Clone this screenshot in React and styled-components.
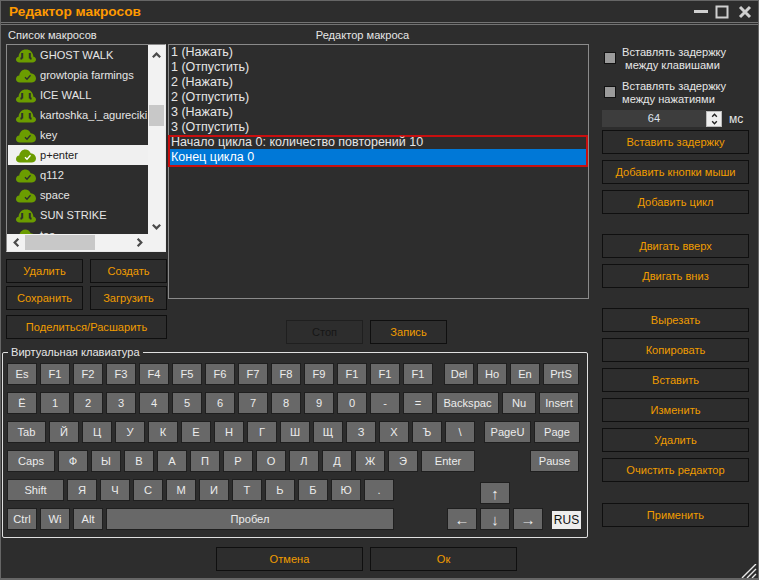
import styled, { createGlobalStyle } from "styled-components";

const Global = createGlobalStyle`
  html, body {
    margin: 0;
    padding: 0;
    background: #2d2d2d;
  }
  * {
    box-sizing: border-box;
  }
`;

const Window = styled.div`
  width: 759px;
  height: 580px;
  background: #2d2d2d;
  color: #e6e6e6;
  font-family: "Liberation Sans", sans-serif;
  font-size: 11.1px;
  border: 1px solid #666;
  border-width: 1px 1px 2px 1px;
  display: flex;
  flex-direction: column;
  position: relative;
  overflow: hidden;
`;

const TitleBar = styled.div`
  height: 22px;
  padding-left: 8px;
  display: flex;
  align-items: center;
  justify-content: space-between;
  border-bottom: 1px solid #737373;
`;

const Title = styled.div`
  color: #ff9a00;
  font-weight: bold;
  font-size: 13.7px;
`;

const WindowIcons = styled.div`
  display: flex;
  align-items: center;
  margin-right: 6px;
`;

const Body = styled.div`
  flex: 1;
  display: flex;
  border-top: 1px solid #737373;
  margin-top: 1px;
`;

const MainColumn = styled.div`
  width: 587px;
  margin-left: 1px;
  display: flex;
  flex-direction: column;
`;

const TopRow = styled.div`
  display: flex;
  padding-left: 4px;
  height: 320px;
`;

const ListColumn = styled.div`
  width: 162px;
`;

const EditorColumn = styled.div`
  flex: 1;
  display: flex;
  flex-direction: column;
`;

const Caption = styled.div`
  height: 19px;
  line-height: 14px;
  padding-top: 3px;
  padding-left: ${(props) => (props.$center ? "0" : "2px")};
  padding-right: ${(props) => (props.$center ? "32px" : "0")};
  text-align: ${(props) => (props.$center ? "center" : "left")};
  color: #e6e6e6;
`;

const ListBox = styled.div`
  width: 160px;
  height: 208px;
  border: 1px solid #8a8a8a;
  border-right-color: #e8e8e8;
  border-bottom-color: #e8e8e8;
  display: grid;
  grid-template-columns: 1fr 17px;
  grid-template-rows: 1fr 17px;
  overflow: hidden;
`;

const Rows = styled.div`
  overflow: hidden;
  padding-left: 1px;
`;

const Row = styled.div`
  height: 20px;
  display: flex;
  align-items: center;
  gap: 4px;
  padding-left: 8px;
  white-space: nowrap;
  overflow: hidden;
  background: ${(props) => (props.$selected ? "#f0f0f0" : "transparent")};
  color: ${(props) => (props.$selected ? "#222" : "#e6e6e6")};
`;

const VScroll = styled.div`
  background: #f2f2f2;
  display: flex;
  flex-direction: column;
  align-items: center;
  position: relative;
  padding-top: 5px;
`;

const VThumb = styled.div`
  width: 15px;
  height: 21px;
  background: #c8c8c8;
  margin-top: 44px;
  margin-bottom: 95px;
`;

const HScroll = styled.div`
  grid-column: 1 / 3;
  background: #f2f2f2;
  display: flex;
  align-items: center;
  padding-left: 4px;
`;

const HThumb = styled.div`
  width: 70px;
  height: 15px;
  background: #c8c8c8;
  margin-left: 3px;
  margin-right: 39px;
`;

const Button = styled.button`
  display: block;
  width: ${(props) => props.$w || 147}px;
  height: 24px;
  padding: 0;
  background: #2d2d2d;
  border: 1px solid ${(props) => (props.$off ? "#1f1f1f" : "#0f0f0f")};
  color: ${(props) => (props.$off ? "#161616" : "#f09c00")};
  font: inherit;
  margin-top: ${(props) => props.$mt || 0}px;
`;

const ButtonGrid = styled.div`
  display: grid;
  grid-template-columns: 77px 77px;
  column-gap: 7px;
  row-gap: 3px;
  margin-top: 7px;
`;

const EditorBox = styled.div`
  height: 255px;
  border: 1px solid #8a8a8a;
  font-size: 12.5px;
`;

const Step = styled.div`
  height: ${(props) => (props.$selected ? 16 : 15)}px;
  line-height: 15px;
  margin-top: ${(props) => (props.$selected ? -1 : 0)}px;
  padding-top: ${(props) => (props.$selected ? 1 : 0)}px;
  padding-left: 2px;
  white-space: nowrap;
  color: ${(props) => (props.$selected ? "#fff" : "#e6e6e6")};
  background: ${(props) => (props.$selected ? "#0078d7" : "transparent")};
`;

const Marked = styled.div`
  margin-left: -1px;
  border: 2px solid #c80f0f;
  height: 32px;
  & > * {
    padding-left: 1px;
  }
  & > :first-child {
    margin-top: -2px;
  }
`;

const RecordRow = styled.div`
  display: flex;
  gap: 7px;
  margin-top: 21px;
  padding-left: 118px;
`;

const Keyboard = styled.fieldset`
  margin: 0;
  width: 586px;
  height: 193px;
  border: 1px solid #e0e0e0;
  border-radius: 2px;
  padding: 4px 0 0 4px;
  display: flex;
  flex-direction: column;
  gap: 7px;
`;

const Legend = styled.legend`
  padding: 0 3px;
  margin-left: 1px;
  line-height: 14px;
  color: #e6e6e6;
`;

const KeyRow = styled.div`
  display: flex;
  gap: 3px;
  height: 22px;
  align-items: flex-start;
`;

const Key = styled.div`
  width: ${(props) => props.$w || 30}px;
  height: 22px;
  margin-left: ${(props) => props.$ml || 0}px;
  margin-top: ${(props) => props.$mt || 0}px;
  flex: none;
  background: #686868;
  border: 1px solid #1f1f1f;
  color: #ececec;
  font-size: ${(props) => (props.$arrow ? "15px" : "inherit")};
  display: flex;
  align-items: center;
  justify-content: center;
  white-space: nowrap;
  overflow: hidden;
`;

const LangBadge = styled.div`
  width: 29px;
  height: 18px;
  margin-left: 6px;
  margin-top: 3px;
  background: #ededed;
  color: #111;
  font-size: 12px;
  display: flex;
  align-items: center;
  justify-content: center;
`;

const FooterRow = styled.div`
  display: flex;
  gap: 7px;
  margin-top: 9px;
  padding-left: 214px;
`;

const Side = styled.div`
  width: 147px;
  margin-left: 13px;
  padding-top: 21px;
`;

const CheckRow = styled.div`
  display: flex;
  align-items: center;
  height: 26px;
  padding-left: 2px;
  gap: 6px;
  margin-bottom: ${(props) => props.$mb || 0}px;
`;

const Check = styled.div`
  width: 12px;
  height: 12px;
  flex: none;
  margin-top: -2px;
  background: #9a9a9a;
  border: 1px solid #111;
`;

const CheckText = styled.div`
  line-height: 13px;
  white-space: pre;
`;

const SpinRow = styled.div`
  display: flex;
  align-items: center;
  height: 17px;
  margin-top: 4px;
`;

const SpinField = styled.div`
  width: 104px;
  height: 17px;
  background: #3d3d3d;
  text-align: center;
  line-height: 16px;
  color: #dfe6f0;
`;

const Spinner = styled.div`
  width: 16px;
  height: 16px;
  background: #eee;
  display: flex;
  flex-direction: column;
  align-items: center;
  justify-content: space-around;
  border: 1px solid #bbb;
`;

const SpinLine = styled.div`
  width: 100%;
  height: 1px;
  background: #999;
`;

const Unit = styled.div`
  margin-left: 7px;
  font-size: 12px;
`;

const Grip = styled.svg`
  position: absolute;
  right: 1px;
  bottom: 0;
`;

const CloudOk = ({ selected }) => (
  <svg width="20" height="15" viewBox="0 0 20 15" style={{ flex: "none" }}>
    <path d="M4 14.5C1.5 14.5 0 13 0 11 0 9 1.4 7.7 3.2 7.5 3.8 3.6 6.5 1.5 9.2 1.5 11.8 1.5 13.8 3 14.7 5.2 17.6 5.4 20 7.6 20 10.4 20 12.8 18 14.5 15.5 14.5Z" fill="#6b9c00" />
    <path d="M9 9.2L11 11.2 14.5 7.2" fill="none" stroke={selected ? "#fff" : "#2d2d2d"} strokeWidth="1.3" />
  </svg>
);

const CloudSync = () => (
  <svg width="20" height="15" viewBox="0 0 20 15" style={{ flex: "none" }}>
    <path d="M3.5 14.5C1.4 14.5 0 13.3 0 11.6 0 10 1.1 8.9 2.6 8.7 3 4.2 5.8 1.5 10 1.5 14.2 1.5 17 4.2 17.4 8.7 18.9 8.9 20 10 20 11.6 20 13.3 18.6 14.5 16.5 14.5Z" fill="#6b9c00" />
    <path d="M6.2 5V10.5M6.2 10.5H4.4M13.8 5V10.5M13.8 10.5H15.6" fill="none" stroke="#2d2d2d" strokeWidth="2" />
  </svg>
);

const Arrow = ({ dir, color = "#4a4a4a", size = 11 }) => {
  const points = {
    up: "2,8 6,4 10,8",
    down: "2,4 6,8 10,4",
    left: "8,2 4,6 8,10",
    right: "4,2 8,6 4,10",
  };
  return (
    <svg width={size} height={size} viewBox="0 0 12 12" style={{ flex: "none" }}>
      <polyline points={points[dir]} fill="none" stroke={color} strokeWidth="2.4" />
    </svg>
  );
};

const macros = [
  ["GHOST WALK", "sync"],
  ["growtopia farmings", "ok"],
  ["ICE WALL", "sync"],
  ["kartoshka_i_agureciki", "sync"],
  ["key", "ok"],
  ["p+enter", "ok", true],
  ["q112", "ok"],
  ["space", "ok"],
  ["SUN STRIKE", "sync"],
  ["tes", "ok"],
];

const steps = ["1 (Нажать)", "1 (Отпустить)", "2 (Нажать)", "2 (Отпустить)", "3 (Нажать)", "3 (Отпустить)"];

const keyRows = [
  [["Es"], ["F1"], ["F2"], ["F3"], ["F4"], ["F5"], ["F6"], ["F7"], ["F8"], ["F9"], ["F1"], ["F1"], ["F1"], ["Del", 30, 8], ["Ho"], ["En"], ["PrtS", 36]],
  [["Ё"], ["1"], ["2"], ["3"], ["4"], ["5"], ["6"], ["7"], ["8"], ["9"], ["0"], ["-"], ["="], ["Backspac", 63], ["Nu", 34], ["Insert", 40]],
  [["Tab", 39], ["Й"], ["Ц"], ["У"], ["К"], ["Е"], ["Н"], ["Г"], ["Ш"], ["Щ"], ["З"], ["Х"], ["Ъ"], ["\\"], ["PageU", 47, 6], ["Page", 46]],
  [["Caps", 48], ["Ф"], ["Ы"], ["В"], ["А"], ["П"], ["Р"], ["О"], ["Л"], ["Д"], ["Ж"], ["Э"], ["Enter", 54], ["Pause", 49, 52]],
  [["Shift", 57], ["Я"], ["Ч"], ["С"], ["М"], ["И"], ["Т"], ["Ь"], ["Б"], ["Ю"], ["."], ["↑", 30, 83, 3]],
  [["Ctrl"], ["Wi"], ["Alt"], ["Пробел", 288], ["←", 30, 50], ["↓"], ["→"]],
];

const arrows = "↑←↓→";

export default function App() {
  return (
    <Window>
      <Global />
      <TitleBar>
        <Title>Редактор макросов</Title>
        <WindowIcons>
          <svg width="58" height="14" viewBox="0 0 58 14">
            <rect x="0" y="5" width="14" height="3" fill="#cfcfcf" />
            <rect x="22.5" y="1.5" width="11" height="11" fill="none" stroke="#cfcfcf" strokeWidth="2" />
            <path d="M46 2L56 12M56 2L46 12" stroke="#cfcfcf" strokeWidth="3" />
          </svg>
        </WindowIcons>
      </TitleBar>
      <Body>
        <MainColumn>
          <TopRow>
            <ListColumn>
              <Caption>Список макросов</Caption>
              <ListBox>
                <Rows>
                  {macros.map(([name, kind, selected]) => (
                    <Row key={name} $selected={selected}>
                      {kind === "ok" ? <CloudOk selected={selected} /> : <CloudSync />}
                      {name}
                    </Row>
                  ))}
                </Rows>
                <VScroll>
                  <Arrow dir="up" />
                  <VThumb />
                  <Arrow dir="down" />
                </VScroll>
                <HScroll>
                  <Arrow dir="left" />
                  <HThumb />
                  <Arrow dir="right" />
                </HScroll>
              </ListBox>
              <ButtonGrid>
                <Button $w={77}>Удалить</Button>
                <Button $w={77}>Создать</Button>
                <Button $w={77}>Сохранить</Button>
                <Button $w={77}>Загрузить</Button>
              </ButtonGrid>
              <Button $w={161} $mt={5}>Поделиться/Расшарить</Button>
            </ListColumn>
            <EditorColumn>
              <Caption $center>Редактор макроса</Caption>
              <EditorBox>
                {steps.map((step, i) => (
                  <Step key={i}>{step}</Step>
                ))}
                <Marked>
                  <Step>Начало цикла 0: количество повторений 10</Step>
                  <Step $selected>Конец цикла 0</Step>
                </Marked>
              </EditorBox>
              <RecordRow>
                <Button $w={77} $off>Стоп</Button>
                <Button $w={77}>Запись</Button>
              </RecordRow>
            </EditorColumn>
          </TopRow>
          <Keyboard>
            <Legend>Виртуальная клавиатура</Legend>
            {keyRows.map((row, r) => (
              <KeyRow key={r}>
                {row.map(([label, w, ml, mt], k) => (
                  <Key key={k} $w={w} $ml={ml} $mt={mt} $arrow={arrows.includes(label)}>{label}</Key>
                ))}
                {r === 5 && <LangBadge>RUS</LangBadge>}
              </KeyRow>
            ))}
          </Keyboard>
          <FooterRow>
            <Button>Отмена</Button>
            <Button>Ок</Button>
          </FooterRow>
        </MainColumn>
        <Side>
          <CheckRow $mb={8}>
            <Check />
            <CheckText>{"Вставлять задержку\n между клавишами"}</CheckText>
          </CheckRow>
          <CheckRow>
            <Check />
            <CheckText>{"Вставлять задержку\nмежду нажатиями"}</CheckText>
          </CheckRow>
          <SpinRow>
            <SpinField>64</SpinField>
            <Spinner>
              <Arrow dir="up" size={7} color="#222" />
              <SpinLine />
              <Arrow dir="down" size={7} color="#222" />
            </Spinner>
            <Unit>мс</Unit>
          </SpinRow>
          <Button $mt={3}>Вставить задержку</Button>
          <Button $mt={6}>Добавить кнопки мыши</Button>
          <Button $mt={6}>Добавить цикл</Button>
          <Button $mt={20}>Двигать вверх</Button>
          <Button $mt={6}>Двигать вниз</Button>
          <Button $mt={20}>Вырезать</Button>
          <Button $mt={6}>Копировать</Button>
          <Button $mt={6}>Вставить</Button>
          <Button $mt={6}>Изменить</Button>
          <Button $mt={6}>Удалить</Button>
          <Button $mt={6}>Очистить редактор</Button>
          <Button $mt={21}>Применить</Button>
        </Side>
      </Body>
      <Grip width="16" height="14" viewBox="0 0 16 14">
        <path d="M1 14L15 0M6 14L15 5M11 14L15 10" stroke="#e8e8e8" strokeWidth="1.4" />
      </Grip>
    </Window>
  );
}
